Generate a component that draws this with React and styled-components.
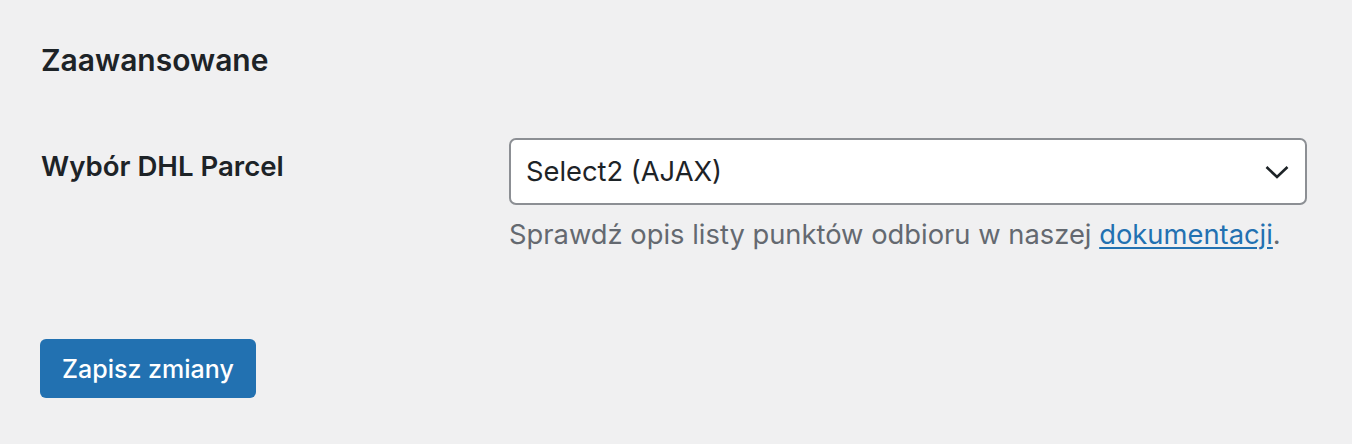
import styled, { createGlobalStyle } from 'styled-components';

const GlobalStyle = createGlobalStyle`
    html, body {
        margin: 0;
        background: #f0f0f1;
    }
    body {
        font-family: Inter, "Noto Sans", sans-serif;
        color: #1d2327;
    }
`;

const Page = styled.div`
    padding: 40px 45px 0 40px;
    height: 444px;
    box-sizing: border-box;
`;

const Title = styled.h2`
    margin: 0 0 0 1px;
    font-size: 30px;
    font-weight: 600;
    line-height: 40px;
`;

const FormRow = styled.div`
    display: grid;
    grid-template-columns: 469px 1fr;
    margin-top: 58px;
`;

const Label = styled.label`
    font-size: 27.6px;
    font-weight: 600;
    line-height: 40px;
    padding: 8px 0 0 1px;
`;

const Field = styled.div`
    display: flex;
    flex-direction: column;
`;

const SelectBox = styled.div`
    position: relative;
    height: 67px;
    box-sizing: border-box;
    background: #fff;
    border: 2px solid #8c8f94;
    border-radius: 7px;
    display: flex;
    align-items: center;
    padding: 0 60px 0 15px;
    font-size: 27.3px;
`;

const Chevron = styled.svg`
    position: absolute;
    right: 15px;
    top: 50%;
    transform: translateY(-50%);
`;

const Description = styled.p`
    margin: 10px 0 0;
    font-size: 27.35px;
    line-height: 40px;
    color: #646970;
`;

const DocLink = styled.a`
    color: #2271b1;
    text-decoration: underline;
    text-underline-offset: 3px;
`;

const SaveButton = styled.button`
    margin-top: 84px;
    height: 59px;
    padding: 0 22px;
    border: none;
    border-radius: 6px;
    background: #2271b1;
    color: #fff;
    font-family: inherit;
    font-size: 25px;
    font-weight: 500;
    cursor: pointer;
`;

export default function App() {
    return (
        <Page>
            <GlobalStyle />
            <Title>Zaawansowane</Title>
            <FormRow>
                <Label>Wybór DHL Parcel</Label>
                <Field>
                    <SelectBox>
                        Select2 (AJAX)
                        <Chevron width="26" height="16" viewBox="0 0 26 16">
                            <path d="M2.5 3 L13 13 L23.5 3" fill="none" stroke="#1d2327" strokeWidth="2.6" />
                        </Chevron>
                    </SelectBox>
                    <Description>
                        Sprawdź opis listy punktów odbioru w naszej <DocLink href="#">dokumentacji</DocLink>.
                    </Description>
                </Field>
            </FormRow>
            <SaveButton>Zapisz zmiany</SaveButton>
        </Page>
    );
}
